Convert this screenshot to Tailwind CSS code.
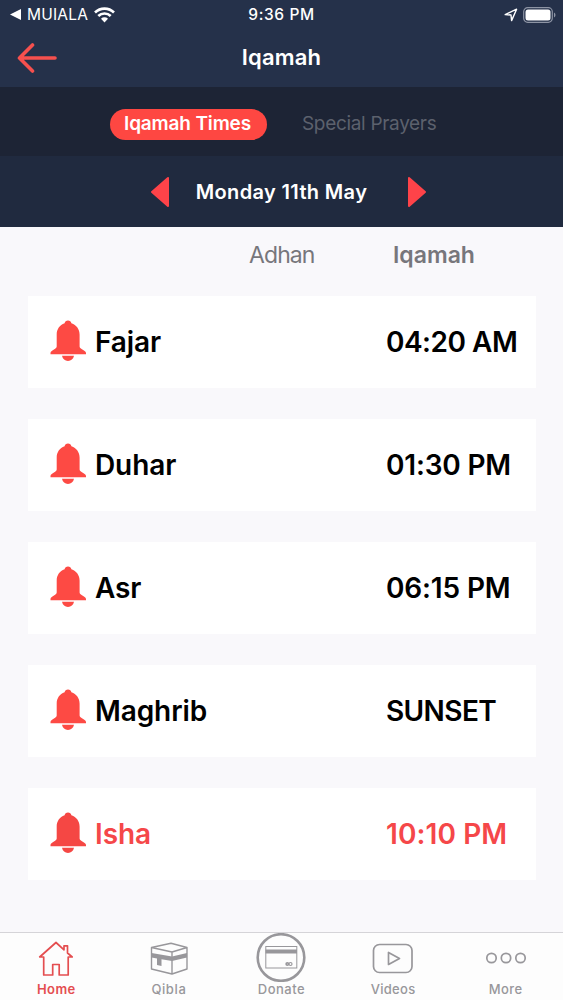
<!DOCTYPE html>
<html lang="en">
<head>
<meta charset="utf-8">
<title>Iqamah</title>
<script src="https://cdn.jsdelivr.net/npm/@tailwindcss/browser@4"></script>
</head>
<body class="w-[563px] h-[1000px] overflow-hidden bg-[#f9f8fb] font-['Inter',sans-serif] flex flex-col">
<svg class="hidden">
  <symbol id="bell" viewBox="0 0 36 42">
    <path d="M18 .5c1.800 0 3 1 3.400 2.800C26.500 5 29.600 9.500 29.600 14.500V26.500c0 3 6.400 3.500 6.400 6.500v1.300H.5V33c0-3 6.200-3.500 6.200-6.500V14.500C6.700 9.500 9.600 5 14.600 3.300 15 1.500 16.200.5 18 .5ZM12 35.800h12c-.6 3.200-3 5.200-6 5.200s-5.400-2-6-5.200Z" fill="currentColor"/>
  </symbol>
</svg>
<header class="h-[87px] shrink-0 bg-[#25314a] text-white">
  <div class="h-7 grid grid-cols-[188px_187px_188px] items-center">
    <div class="flex items-center pl-[10px]">
      <svg class="w-[11px] h-[11px]" viewBox="0 0 11 11"><path d="M0 5.500 11 0v11Z" fill="#fff"/></svg>
      <span class="ml-[6px] pt-px text-[15.500px] leading-7 tracking-[0.2px]">MUIALA</span>
      <svg class="ml-[6px] w-[21px] h-4" viewBox="0 0 21 16" fill="none" stroke="#fff" stroke-width="2.600"><path d="M1 5.500a13.500 13.500 0 0 1 19 0M4.300 9a8.800 8.800 0 0 1 12.400 0"/><path d="M7 11.700a5 5 0 0 1 7 0L10.500 15.500Z" fill="#fff" stroke="none"/></svg>
    </div>
    <div class="pt-px text-center text-[15.500px] font-medium whitespace-nowrap leading-7 tracking-[0.600px]">9:36 PM</div>
    <div class="flex items-center justify-end pr-[7px] gap-[5px]">
      <svg class="w-[14px] h-[14px]" viewBox="0 0 14 14" fill="none" stroke="#fff" stroke-width="1.400" stroke-linejoin="round"><path d="M1.200 6.600 12.600 1.200 7.600 12.600 7 7Z"/></svg>
      <svg class="w-[33px] h-4" viewBox="0 0 33 16"><rect x=".7" y=".7" width="28.600" height="14.600" rx="4" fill="none" stroke="#8d94a4" stroke-width="1.200"/><rect x="2.500" y="2.500" width="25" height="11" rx="2.500" fill="#fff"/><path d="M31 5.500c2 1 2 4 0 5Z" fill="#8d94a4"/></svg>
    </div>
  </div>
  <div class="h-[59px] grid grid-cols-[80px_1fr_80px] items-center">
    <svg class="ml-[17px] w-10 h-[30px]" viewBox="0 0 40 30" fill="none" stroke="#f6504e" stroke-width="3.600" stroke-linecap="round" stroke-linejoin="round"><path d="M38 15H3M15.500 2 2.500 15l13 13"/></svg>
    <h1 class="text-center text-[22px] font-semibold leading-none tracking-[0.200px] -mt-[2px]">Iqamah</h1>
  </div>
</header>
<nav class="h-[69px] shrink-0 bg-[#1d2435] flex items-center pl-[110px] pt-[6px]">
  <div class="w-[157px] h-[31px] rounded-full bg-[#fe4742] text-white text-[19px] font-semibold text-center leading-[30px] tracking-[-0.150px] pr-[2px] whitespace-nowrap">Iqamah Times</div>
  <div class="ml-[35px] text-[19px] leading-[30px] tracking-[-0.320px] text-[#5c616d] whitespace-nowrap -mt-px">Special Prayers</div>
</nav>
<div class="h-[71px] shrink-0 bg-[#202a3f] grid grid-cols-[169px_225px_169px] items-center">
  <svg class="justify-self-end w-[19px] h-8" viewBox="0 0 19 32"><path d="M18 2v28L2 16Z" fill="#fe4349" stroke="#fe4349" stroke-width="2" stroke-linejoin="round"/></svg>
  <div class="text-center text-[20px] font-semibold text-white whitespace-nowrap tracking-[0.350px]">Monday 11th May</div>
  <svg class="ml-[14px] w-[19px] h-8" viewBox="0 0 19 32"><path d="M1 2v28L17 16Z" fill="#fe4349" stroke="#fe4349" stroke-width="2" stroke-linejoin="round"/></svg>
</div>
<main class="h-[705px] shrink-0">
  <div class="h-[69px] pt-[14px] flex text-[#77767b] text-[23px] leading-7">
    <div class="w-[393px] pl-[249px] tracking-[-0.900px]">Adhan</div><div class="font-semibold">Iqamah</div>
  </div>
  <div class="pl-7 pr-[27px] grid gap-[31px] text-[28px] font-semibold tracking-[-0.100px] text-black whitespace-nowrap">
    <div class="h-[92px] bg-white flex items-center"><svg class="ml-[22px] w-9 h-[42px] text-[#fd4a44] -mt-[2px]"><use href="#bell"/></svg><span class="ml-[9px] w-[291px]">Fajar</span><span class="tracking-[-0.500px]">04:20 AM</span></div>
    <div class="h-[92px] bg-white flex items-center"><svg class="ml-[22px] w-9 h-[42px] text-[#fd4a44] -mt-[2px]"><use href="#bell"/></svg><span class="ml-[9px] w-[291px]">Duhar</span><span class="tracking-[-0.200px]">01:30 PM</span></div>
    <div class="h-[92px] bg-white flex items-center"><svg class="ml-[22px] w-9 h-[42px] text-[#fd4a44] -mt-[2px]"><use href="#bell"/></svg><span class="ml-[9px] w-[291px]">Asr</span><span class="tracking-[-0.150px]">06:15 PM</span></div>
    <div class="h-[92px] bg-white flex items-center"><svg class="ml-[22px] w-9 h-[42px] text-[#fd4a44] -mt-[2px]"><use href="#bell"/></svg><span class="ml-[9px] w-[291px]">Maghrib</span><span class="tracking-[-0.600px]">SUNSET</span></div>
    <div class="h-[92px] bg-white flex items-center text-[#f54749]"><svg class="ml-[22px] w-9 h-[42px] text-[#f54744] -mt-[2px]"><use href="#bell"/></svg><span class="ml-[9px] w-[291px]">Isha</span><span class="tracking-[0.100px]">10:10 PM</span></div>
  </div>
</main>
<footer class="h-[68px] shrink-0 bg-[#fdfdfd] border-t border-[#d5d4d8] grid grid-cols-5 text-center text-[13px] font-medium leading-[14px] tracking-[0.200px] text-[#98979b]">
  <div class="flex flex-col items-center text-[#e44e50]">
    <svg class="h-[49px] w-[60px]" viewBox="0 0 60 49" fill="none" stroke="currentColor" stroke-width="1.700" stroke-linejoin="round"><path d="M30 9.500 13.700 24h4v18h9V31.500h6.500V42h9V24h4L41.500 20V12.800h-3.500v4Z"/></svg>
    <span class="font-semibold tracking-[0.400px]">Home</span>
  </div>
  <div class="flex flex-col items-center">
    <svg class="h-[49px] w-[60px]" viewBox="0 0 60 49" fill="none" stroke="currentColor" stroke-width="1.400" stroke-linejoin="round"><path d="M12.500 14.500 32 10.200l16 4.300v21.500L33 41l-20.500-5ZM12.500 14.500 33 19l15-4.500M33 19v22"/><path d="M12.500 20 33 23.500 48 20v4.500L33 28l-10.500-1.800V33l-4.500-1v-6.600l-5.500-.9Z" fill="currentColor" stroke="none"/></svg>
    <span class="tracking-[0.600px]">Qibla</span>
  </div>
  <div class="flex flex-col items-center">
    <svg class="h-[49px] w-[60px]" viewBox="0 0 60 49" fill="none" stroke="currentColor"><circle cx="30" cy="24.500" r="23.300" stroke-width="2.600"/><rect x="14.800" y="13.500" width="31" height="21.500" stroke-width="1"/><path d="M14.500 18.500h31.500" stroke-width="4"/><circle cx="36.300" cy="31" r="1.200" stroke-width="1.600"/><circle cx="39.500" cy="31" r="1.500" stroke-width="1.200"/></svg>
    <span class="tracking-[0.500px]">Donate</span>
  </div>
  <div class="flex flex-col items-center">
    <svg class="h-[49px] w-[60px] -ml-[2px]" viewBox="0 0 60 49" fill="none" stroke="currentColor" stroke-width="1.700" stroke-linejoin="round"><rect x="10.500" y="11.500" width="38.500" height="28" rx="6"/><path d="M25.500 19.500v12L36.500 25.500Z"/></svg>
    <span class="-ml-[2px] tracking-[0.300px]">Videos</span>
  </div>
  <div class="flex flex-col items-center">
    <svg class="h-[49px] w-[60px] -ml-[2px]" viewBox="0 0 60 49" fill="none" stroke="currentColor" stroke-width="1.700"><circle cx="15.500" cy="25" r="4.700"/><circle cx="30" cy="25" r="4.700"/><circle cx="44.500" cy="25" r="4.700"/></svg>
    <span class="-ml-[2px] tracking-[0.400px]">More</span>
  </div>
</footer>
</body>
</html>
